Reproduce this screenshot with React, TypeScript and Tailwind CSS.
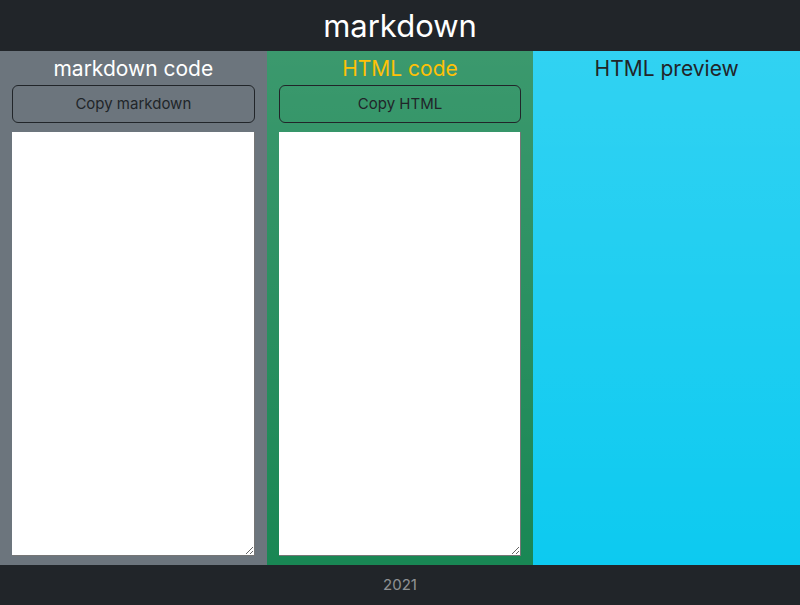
export default function App() {
  const font = { fontFamily: 'Inter, "Liberation Sans", sans-serif' };
  return (
    <div className="flex h-[605px] w-[800px] flex-col" style={font}>
      <header className="flex h-[51px] items-center justify-center bg-[#212529]">
        <h1 className="text-[31px] leading-none text-white">markdown</h1>
      </header>

      <main className="grid h-[514px] grid-cols-3">
        {/* markdown input */}
        <section className="flex flex-col bg-[#6c757d] px-3 pb-[9px]">
          <h2 className="mt-[4px] text-center text-[21px] leading-[27px] text-white">markdown code</h2>
          <button className="mt-[3px] h-[38px] rounded-md border border-[#212529] text-[15px] text-[#212529]">
            Copy markdown
          </button>
          <textarea className="mt-[9px] flex-1 resize-y border-r border-b border-[#767676] bg-white" />
        </section>

        {/* html output */}
        <section className="flex flex-col bg-[#198754] bg-linear-to-b from-white/15 to-white/0 px-3 pb-[9px]">
          <h2 className="mt-[4px] text-center text-[21px] leading-[27px] text-[#ffc107]">HTML code</h2>
          <button className="mt-[3px] h-[38px] rounded-md border border-[#212529] text-[15px] text-[#212529]">
            Copy HTML
          </button>
          <textarea className="mt-[9px] flex-1 resize-y border-r border-b border-[#767676] bg-white" />
        </section>

        {/* preview */}
        <section className="flex flex-col bg-[#0dcaf0] bg-linear-to-b from-white/15 to-white/0 px-3">
          <h2 className="mt-[4px] text-center text-[21px] leading-[27px] text-[#212529]">HTML preview</h2>
        </section>
      </main>

      <footer className="flex h-[40px] items-center justify-center bg-[#212529] text-[15px] text-white/50">
        2021
      </footer>
    </div>
  );
}
